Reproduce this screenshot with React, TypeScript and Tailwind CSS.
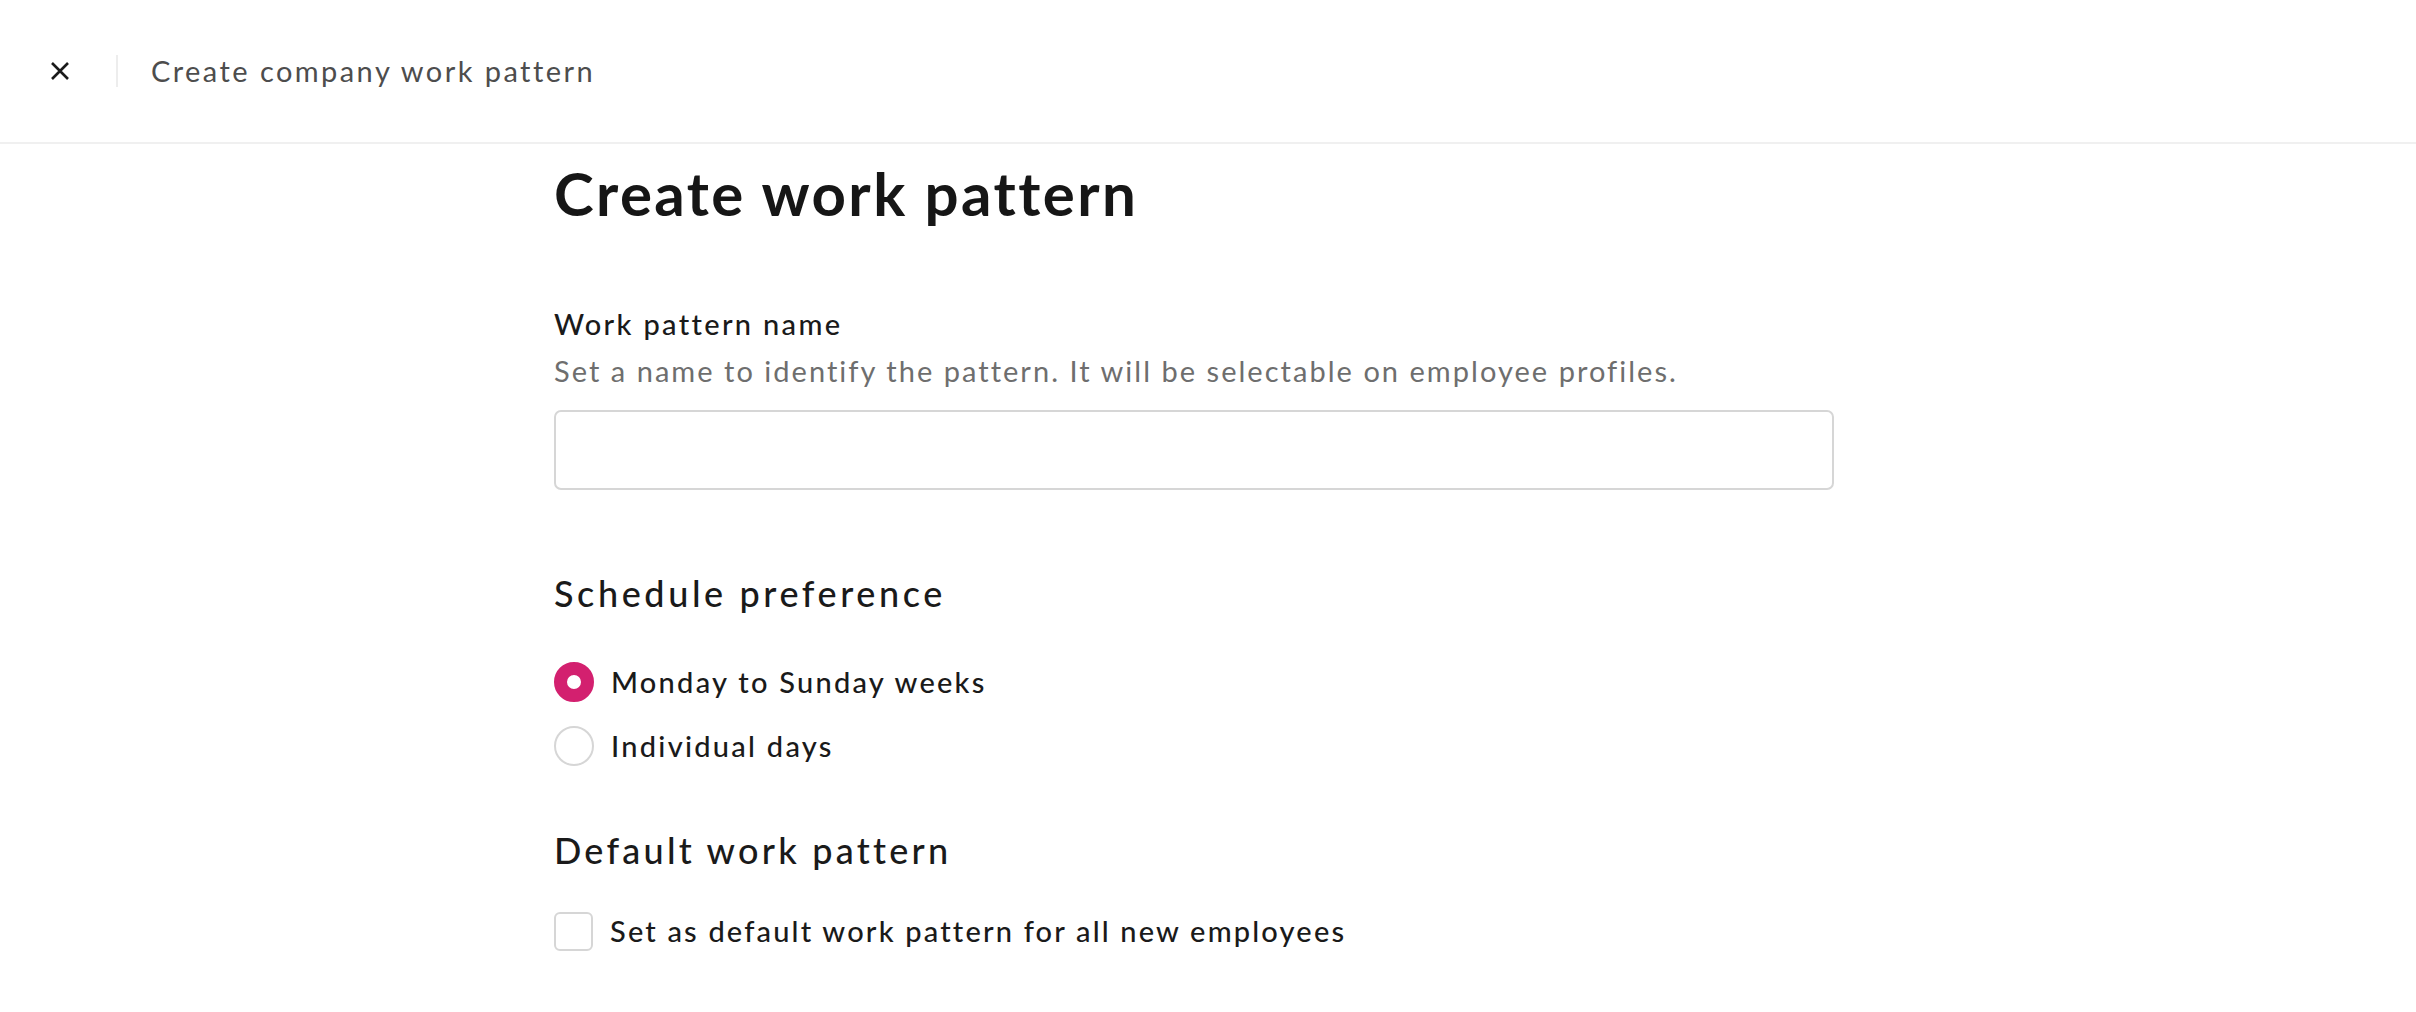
const font = { fontFamily: "Lato, 'Open Sans', sans-serif" };

function Radio({ checked, label }: { checked: boolean; label: string }) {
  return (
    <label className="flex h-10 items-center">
      {checked ? (
        <span className="h-10 w-10 shrink-0 rounded-full border-[13px] border-[#d3206f] bg-white" />
      ) : (
        <span className="h-10 w-10 shrink-0 rounded-full border-2 border-[#d6d6d6] bg-white" />
      )}
      <span className="ml-[17px] text-[29px] leading-10 font-medium tracking-[0.078em] text-[#1a1a1a]">
        {label}
      </span>
    </label>
  );
}

export default function App() {
  return (
    <div className="min-h-screen bg-white" style={font}>
      <header className="flex h-[144px] items-center border-b-2 border-[#f0f0f0]">
        <button className="ml-[50px] flex h-5 w-5 items-center justify-center text-[#1a1a1a]">
          <svg viewBox="0 0 20 20" className="h-5 w-5" fill="none" stroke="currentColor" strokeWidth="2.6">
            <path d="M2 2L18 18M18 2L2 18" />
          </svg>
        </button>
        <div className="ml-[46px] h-8 w-[2px] bg-[#ededed]" />
        <h1 className="ml-[33px] text-[29px] leading-9 tracking-[0.084em] text-[#4d4d4d]">
          Create company work pattern
        </h1>
      </header>

      <main className="ml-[554px] w-[1280px] pt-[19px]">
        <h2 className="text-[60px] leading-[60px] font-bold tracking-[0.04em] text-[#161616]">
          Create work pattern
        </h2>

        <div className="mt-[83px]">
          <div className="text-[29px] leading-9 font-medium tracking-[0.08em] text-[#1a1a1a]">
            Work pattern name
          </div>
          <div className="mt-[11px] text-[29px] leading-9 tracking-[0.07em] text-[#6e6e6e]">
            Set a name to identify the pattern. It will be selectable on employee profiles.
          </div>
          <input
            type="text"
            className="mt-[21px] h-20 w-full rounded-[7px] border-2 border-[#d6d6d6] px-5 text-[27px] outline-none"
          />
        </div>

        <h3 className="mt-[81px] text-[36px] leading-[44px] font-medium tracking-[0.1em] text-[#1a1a1a]">
          Schedule preference
        </h3>
        <div className="mt-[47px] flex flex-col gap-6">
          <Radio checked label="Monday to Sunday weeks" />
          <Radio checked={false} label="Individual days" />
        </div>

        <h3 className="mt-[62px] text-[36px] leading-[44px] font-medium tracking-[0.09em] text-[#1a1a1a]">
          Default work pattern
        </h3>
        <label className="mt-[39px] flex h-10 items-center">
          <span className="h-[39px] w-[39px] shrink-0 rounded-[6px] border-2 border-[#d6d6d6] bg-white" />
          <span className="ml-[17px] text-[29px] leading-10 font-medium tracking-[0.075em] text-[#1a1a1a]">
            Set as default work pattern for all new employees
          </span>
        </label>
      </main>
    </div>
  );
}
